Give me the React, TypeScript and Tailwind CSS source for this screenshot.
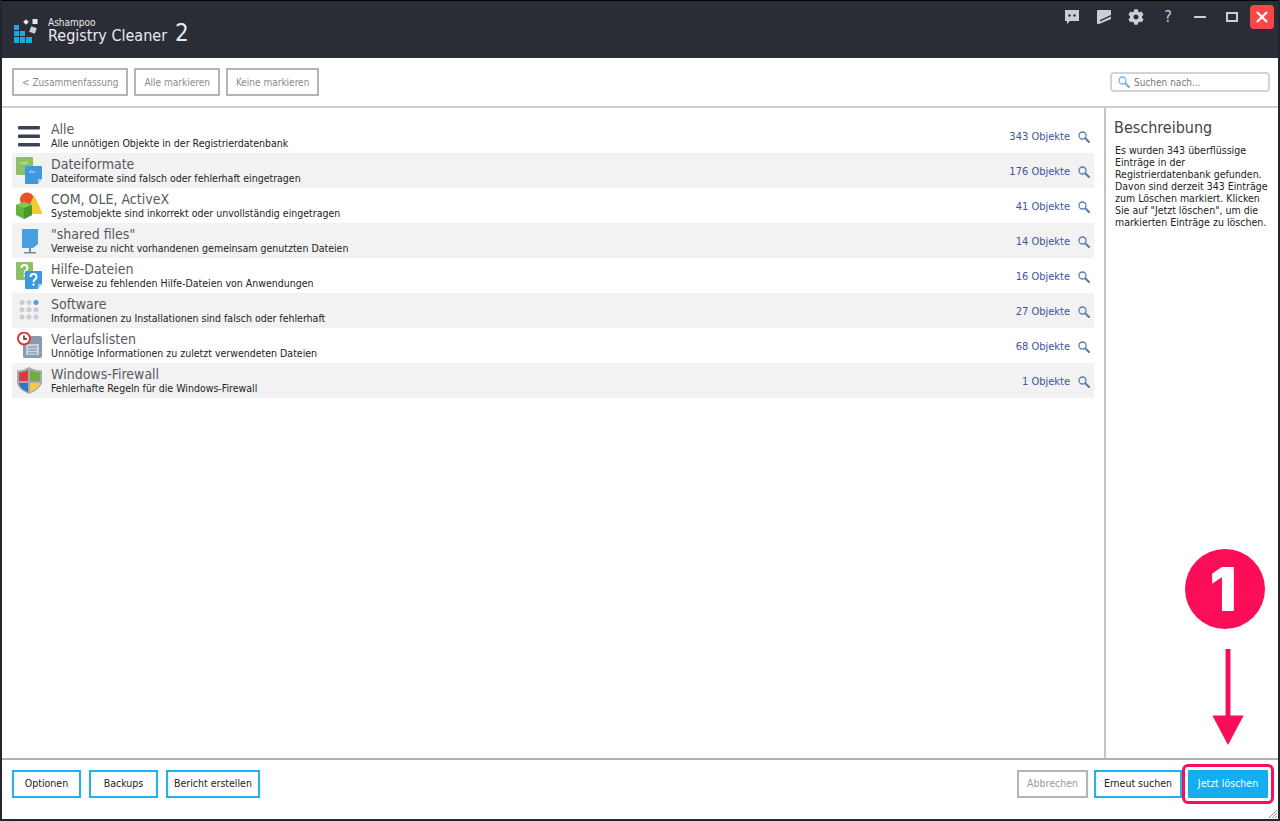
import { FaCog } from 'react-icons/fa';
import type { ReactNode } from 'react';

function Page({ x, y, color, label }: { x: number; y: number; color: string; label: string }) {
  return (
    <g transform={`translate(${x} ${y})`}>
      <path d="M1 0h15a1 1 0 0 1 1 1v12l-4 5H1a1 1 0 0 1-1-1V1a1 1 0 0 1 1-1z" fill={color} />
      <path d="M17 13l-4 5v-4a1 1 0 0 1 1-1z" fill="#ffffff" opacity="0.55" />
      {label === '?' ? (
        <path d="M5.500 6c0-4 6-4 6 0 0 2.500-3 2.500-3 5M8.500 12.500v2" fill="none" stroke="#fff" strokeWidth="2" />
      ) : (
        <text x="4" y="7" fontSize="4" fill="#fff" opacity="0.85">{label}</text>
      )}
    </g>
  );
}

const icons: Record<string, ReactNode> = {
  all: (
    <svg viewBox="0 0 28 28" className="w-7 h-7">
      <rect x="4" y="4" width="22" height="3.500" rx="1" fill="#3c4257" />
      <rect x="4" y="12.500" width="22" height="3.500" rx="1" fill="#3c4257" />
      <rect x="4" y="21" width="22" height="3.500" rx="1" fill="#3c4257" />
    </svg>
  ),
  formats: (
    <svg viewBox="0 0 28 28" className="w-7 h-7">
      <Page x={2} y={0} color="#8cc063" label="mp3" />
      <Page x={11} y={9} color="#3f97dd" label="doc" />
    </svg>
  ),
  com: (
    <svg viewBox="0 0 28 28" className="w-7 h-7">
      <circle cx="13" cy="7.500" r="7" fill="#e8522c" />
      <path d="M20 3l9 19H12z" fill="#f6c92f" />
      <path d="M2 13l8-3 8 3v10l-8 4-8-4z" fill="#5fb33a" />
      <path d="M2 13l8 3 8-3-8-3z" fill="#82c94f" />
      <path d="M10 16v11l8-4V13z" fill="#4a9a2a" />
    </svg>
  ),
  shared: (
    <svg viewBox="0 0 28 28" className="w-7 h-7">
      <path d="M8 2h16v15l-5 4H8z" fill="#4a9fe3" />
      <path d="M15 21h2v4h-2z" fill="#7a8a99" />
      <rect x="10" y="25" width="12" height="1.500" fill="#7a8a99" />
    </svg>
  ),
  help: (
    <svg viewBox="0 0 28 28" className="w-7 h-7">
      <Page x={2} y={0} color="#8cc063" label="?" />
      <Page x={11} y={9} color="#3f97dd" label="?" />
    </svg>
  ),
  software: (
    <svg viewBox="0 0 28 28" className="w-7 h-7">
      {[0, 1, 2].flatMap((r) =>
        [0, 1, 2].map((c) => (
          <circle key={`${r}${c}`} cx={8 + c * 7} cy={5.500 + r * 7.300} r="2.500" fill={r === 0 && c === 2 ? '#4a9fe3' : '#c9ccd1'} />
        )),
      )}
    </svg>
  ),
  history: (
    <svg viewBox="0 0 28 28" className="w-7 h-7">
      <rect x="9" y="4" width="19" height="22" rx="2" fill="#8a9bb0" />
      <rect x="12" y="12" width="13" height="11" fill="#c8d2de" />
      <path d="M14 15h9M14 18h9M14 21h9" stroke="#7a8a9d" strokeWidth="1" />
      <circle cx="10" cy="6.500" r="6" fill="#fff" stroke="#d83a3f" strokeWidth="2" />
      <path d="M10 3.500v3.500h3" fill="none" stroke="#333" strokeWidth="1.500" />
    </svg>
  ),
  firewall: (
    <svg viewBox="0 0 28 28" className="w-7 h-7">
      <path d="M15 0c4 2.500 8 3.500 13 3.500V14c0 6-6 10-13 13C8 24 3 20 3 14V3.500C7 3.500 11 2.500 15 0z" fill="#a5aab0" />
      <path d="M5 5.500c3 0 6-1 9-2.500v11H5z" fill="#d83a3f" />
      <path d="M16 3c3 1.500 6 2.500 10 2.500V14H16z" fill="#72ac3e" />
      <path d="M5 16h9v9c-5-2-9-5-9-9z" fill="#2f78c4" />
      <path d="M16 16h10c0 4-5 7-10 9z" fill="#f7c64b" />
    </svg>
  ),
};

const rows = [
  { icon: 'all', title: 'Alle', sub: 'Alle unnötigen Objekte in der Registrierdatenbank', n: 343 },
  { icon: 'formats', title: 'Dateiformate', sub: 'Dateiformate sind falsch oder fehlerhaft eingetragen', n: 176 },
  { icon: 'com', title: 'COM, OLE, ActiveX', sub: 'Systemobjekte sind inkorrekt oder unvollständig eingetragen', n: 41 },
  { icon: 'shared', title: '"shared files"', sub: 'Verweise zu nicht vorhandenen gemeinsam genutzten Dateien', n: 14 },
  { icon: 'help', title: 'Hilfe-Dateien', sub: 'Verweise zu fehlenden Hilfe-Dateien von Anwendungen', n: 16 },
  { icon: 'software', title: 'Software', sub: 'Informationen zu Installationen sind falsch oder fehlerhaft', n: 27 },
  { icon: 'history', title: 'Verlaufslisten', sub: 'Unnötige Informationen zu zuletzt verwendeten Dateien', n: 68 },
  { icon: 'firewall', title: 'Windows-Firewall', sub: 'Fehlerhafte Regeln für die Windows-Firewall', n: 1 },
];

function Lens({ className }: { className: string }) {
  return (
    <svg viewBox="0 0 12 12" className={className} fill="none" stroke="currentColor">
      <circle cx="4.500" cy="4.500" r="3.500" strokeWidth="1.300" />
      <path d="M7.500 7.500L11 11" strokeWidth="2.200" strokeLinecap="round" />
    </svg>
  );
}

function GrayButton({ children }: { children: ReactNode }) {
  return (
    <button className="h-7 px-2 border-2 border-[#b4b4b8] text-[#8a8a8e] text-[10px]">{children}</button>
  );
}

function BlueButton({ children }: { children: ReactNode }) {
  return (
    <button className="h-7 min-w-[69px] px-1.5 border-2 border-[#1eb2f2] text-[#222] text-[10.5px]">{children}</button>
  );
}

function Logo() {
  return (
    <svg viewBox="0 0 28 28" className="w-7 h-7 shrink-0">
      <rect x="2" y="8" width="5" height="5" fill="#12aee2" />
      <rect x="2" y="14" width="5" height="5" fill="#12aee2" />
      <rect x="2" y="20" width="5" height="6" fill="#12aee2" />
      <rect x="8" y="14" width="5" height="5" fill="#12aee2" />
      <rect x="8" y="20" width="5" height="6" fill="#12aee2" />
      <rect x="14" y="20" width="6" height="6" fill="#12aee2" />
      <rect x="12" y="3" width="4" height="4" fill="#e8e8e8" transform="rotate(45 14 5)" />
      <rect x="20.500" y="2" width="5" height="5" fill="#e8e8e8" />
      <rect x="18" y="10" width="6" height="6" fill="#d0d0d0" transform="rotate(20 21 13)" />
    </svg>
  );
}

export default function App() {
  return (
    <div className="relative w-screen h-screen flex flex-col bg-white border-x-2 border-b-2 border-[#23262d] font-['DejaVu_Sans_Condensed','DejaVu_Sans',sans-serif] overflow-hidden">
      <header className="h-[58px] shrink-0 flex bg-[#2a2d35] border-t border-black">
        <div className="flex items-start pl-2.5 pt-4">
          <Logo />
          <div className="ml-2 text-[#e8eaee]">
            <div className="text-[10px] leading-3">Ashampoo</div>
            <div className="flex items-baseline gap-2 -mt-1.5">
              <span className="text-base leading-5">Registry Cleaner</span>
              <span className="text-2xl leading-5">2</span>
            </div>
          </div>
        </div>
        <div className="ml-auto flex items-start pt-1 pr-1 text-[#c9ced8]">
          <div className="flex items-center gap-4 h-6">
            <svg viewBox="0 0 16 16" className="w-4 h-4 fill-current">
              <path d="M1 1h14v11H6l-3 3v-3H1z" />
              <circle cx="5.500" cy="6.500" r="1.200" fill="#2a2d35" />
              <circle cx="10.500" cy="6.500" r="1.200" fill="#2a2d35" />
            </svg>
            <svg viewBox="0 0 16 16" className="w-4 h-4 fill-current">
              <path d="M2 1h12a1 1 0 0 1 1 1v8l-12 5H2a1 1 0 0 1-1-1V2a1 1 0 0 1 1-1z" />
              <path d="M4 11l11-5v1.500L4 12.500z" fill="#2a2d35" />
            </svg>
            <FaCog className="w-4 h-4" />
            <span className="w-4 text-center text-base leading-none">?</span>
            <span className="w-4 flex justify-center"><span className="w-3 h-0.5 bg-current" /></span>
            <span className="w-4 flex justify-center"><span className="w-3 h-2.5 border-2 border-current" /></span>
          </div>
          <button className="ml-2.5 w-6 h-6 rounded-sm bg-[#fb4747] text-white flex items-center justify-center">
            <svg viewBox="0 0 12 12" className="w-3 h-3" stroke="currentColor" strokeWidth="2.200">
              <path d="M1 1l10 10M11 1L1 11" />
            </svg>
          </button>
        </div>
      </header>

      <div className="h-[50px] shrink-0 flex items-center gap-1.5 pl-2.5 pr-2 border-b-2 border-[#cfcfd2]">
        <GrayButton>&lt; Zusammenfassung</GrayButton>
        <GrayButton>Alle markieren</GrayButton>
        <GrayButton>Keine markieren</GrayButton>
        <div className="ml-auto w-40 h-5 flex items-center gap-1 px-1.5 border-2 border-[#d4d4d6] rounded">
          <Lens className="w-3 h-3 text-[#7fb2dc]" />
          <span className="text-[10px] text-[#77777b]">Suchen nach...</span>
        </div>
      </div>

      <main className="flex-1 flex min-h-0">
        <div className="flex-1 px-2.5 pt-2.5">
          {rows.map((r, i) => (
            <div key={r.icon} className={`h-[35px] flex items-center ${i % 2 === 1 ? 'bg-[#f2f2f3]' : ''}`}>
              <div className="w-[39px] shrink-0 flex pl-0.5">{icons[r.icon]}</div>
              <div className="flex-1 min-w-0 pb-0.5">
                <div className="text-sm leading-4 text-[#555962]">{r.title}</div>
                <div className="text-[10.5px] leading-3 text-[#222]">{r.sub}</div>
              </div>
              <span className="mt-1 text-[11px] text-[#3f53a0]">{r.n} Objekte</span>
              <Lens className="w-3 h-3 mt-0.5 ml-2 mr-1 text-[#5a7fa8]" />
            </div>
          ))}
        </div>
        <aside className="w-[174px] shrink-0 border-l-2 border-[#c4c4c7] pl-2 pr-1.5 pt-2.5">
          <h2 className="text-base leading-5 text-[#444]">Beschreibung</h2>
          <p className="mt-1.5 ml-px text-[10.5px] leading-3 text-[#222]">
            Es wurden 343 überflüssige Einträge in der Registrierdatenbank gefunden. Davon sind derzeit 343 Einträge zum Löschen markiert. Klicken Sie auf "Jetzt löschen", um die markierten Einträge zu löschen.
          </p>
        </aside>
      </main>

      <footer className="h-[61px] shrink-0 flex items-start gap-2 px-2.5 pt-2.5 border-t-2 border-[#b0b0b3]">
        <BlueButton>Optionen</BlueButton>
        <BlueButton>Backups</BlueButton>
        <BlueButton>Bericht erstellen</BlueButton>
        <div className="ml-auto flex gap-1.5">
          <button className="h-7 min-w-[70px] px-2 border-2 border-[#b4b4b8] text-[#9a9a9e] text-[10.5px]">Abbrechen</button>
          <button className="h-7 px-2 border-2 border-[#1eb2f2] text-[#222] text-[10.5px]">Erneut suchen</button>
          <button className="relative h-7 w-20 bg-[#12aef0] text-white text-[10.5px]">
            Jetzt löschen
            <span className="absolute -inset-1.5 border-[3px] border-[#fb0d58] rounded-md" />
          </button>
        </div>
      </footer>

      <svg viewBox="0 0 10 10" className="absolute right-0 bottom-0 w-2.5 h-2.5" stroke="#9a9a9e">
        <path d="M9 1L1 9M9 4L4 9M9 7L7 9" />
      </svg>

      {/* callout over the delete button */}
      <div className="absolute left-[1183px] top-[549px] w-20 h-20 rounded-full bg-[#fb0d58] flex items-center justify-center">
        <span className="text-white text-6xl font-black font-['Inter',sans-serif] pr-1">1</span>
      </div>
      <svg viewBox="0 0 32 98" className="absolute left-[1210px] top-[649px] w-8 h-24" fill="#fb0d58">
        <rect x="13.500" y="0" width="5" height="70" />
        <path d="M0 68h32L16 98z" />
      </svg>
    </div>
  );
}
